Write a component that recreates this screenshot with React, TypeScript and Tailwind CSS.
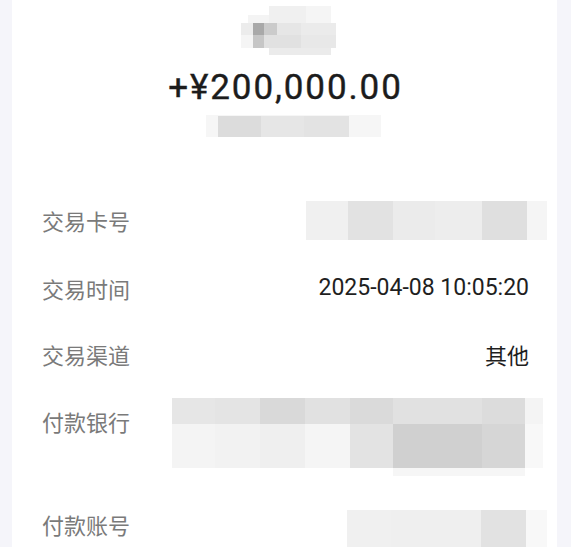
type Cell = { x: number; y: number; w: number; h: number; c: string };

// pixelated (censored) areas, coordinates local to each svg
const TOP_BLUR: Cell[] = [
  { x: 28, y: 0, w: 37, h: 17, c: '#f0f0f0' },
  { x: 65, y: 0, w: 25, h: 17, c: '#f5f5f5' },
  { x: 7, y: 9, w: 21, h: 8, c: '#f4f4f4' },
  { x: 0, y: 17, w: 12, h: 12, c: '#ececec' },
  { x: 12, y: 17, w: 11, h: 12, c: '#a9a9a9' },
  { x: 23, y: 17, w: 13, h: 12, c: '#cbcbcb' },
  { x: 36, y: 17, w: 24, h: 12, c: '#e6e6e6' },
  { x: 60, y: 17, w: 35, h: 12, c: '#ebebeb' },
  { x: 0, y: 29, w: 12, h: 13, c: '#f5f5f5' },
  { x: 12, y: 29, w: 11, h: 13, c: '#c6c6c6' },
  { x: 23, y: 29, w: 37, h: 13, c: '#e1e1e1' },
  { x: 60, y: 29, w: 35, h: 13, c: '#e8e8e8' },
  { x: 28, y: 42, w: 62, h: 7, c: '#ebebeb' },
];

const SUB_BLUR: Cell[] = [
  { x: 0, y: 0, w: 175, h: 22, c: '#f6f6f6' },
  { x: 12, y: 1, w: 43, h: 21, c: '#dcdcdc' },
  { x: 55, y: 1, w: 43, h: 21, c: '#e6e6e6' },
  { x: 98, y: 1, w: 45, h: 21, c: '#e3e3e3' },
];

const CARD_BLUR: Cell[] = [
  { x: 0, y: 0, w: 42, h: 39, c: '#f0f0f0' },
  { x: 42, y: 0, w: 45, h: 39, c: '#e2e2e2' },
  { x: 87, y: 0, w: 42, h: 39, c: '#ebebeb' },
  { x: 129, y: 0, w: 47, h: 39, c: '#ededed' },
  { x: 176, y: 0, w: 45, h: 39, c: '#dfdfdf' },
  { x: 221, y: 0, w: 20, h: 39, c: '#f5f5f5' },
];

const BANK_TOP = ['#e6e6e6', '#e4e4e4', '#d9d9d9', '#e1e1e1', '#dadada', '#e1e1e1', '#e1e1e1', '#dcdcdc'];
const BANK_BOTTOM = ['#f4f4f4', '#f2f2f2', '#efefef', '#f5f5f5', '#e3e3e3', '#d0d0d0', '#d0d0d0', '#d6d6d6'];
const BANK_X = [0, 43, 88, 133, 178, 221, 265, 310, 353];

const BANK_BLUR: Cell[] = [
  ...BANK_TOP.map((c, i) => ({ x: BANK_X[i], y: 0, w: BANK_X[i + 1] - BANK_X[i], h: 26, c })),
  { x: 353, y: 0, w: 18, h: 26, c: '#f4f4f4' },
  ...BANK_BOTTOM.map((c, i) => ({ x: BANK_X[i], y: 26, w: BANK_X[i + 1] - BANK_X[i], h: 44, c })),
  { x: 353, y: 26, w: 18, h: 44, c: '#f8f8f8' },
  { x: 221, y: 70, w: 132, h: 8, c: '#f6f6f6' },
];

const ACCOUNT_BLUR: Cell[] = [
  { x: 0, y: 0, w: 44, h: 40, c: '#f0f0f0' },
  { x: 44, y: 0, w: 45, h: 40, c: '#efefef' },
  { x: 89, y: 0, w: 45, h: 40, c: '#efefef' },
  { x: 134, y: 0, w: 45, h: 40, c: '#e2e2e2' },
  { x: 179, y: 0, w: 21, h: 40, c: '#f8f8f8' },
];

function Mosaic({ cells, width, height, className }: { cells: Cell[]; width: number; height: number; className?: string }) {
  return (
    <svg width={width} height={height} viewBox={`0 0 ${width} ${height}`} className={className}>
      {cells.map((b, i) => (
        <rect key={i} x={b.x} y={b.y} width={b.w} height={b.h} fill={b.c} />
      ))}
    </svg>
  );
}

const labelCls = "text-[22px] leading-[30px] text-[#7a7a7a] font-['Noto_Sans_CJK_SC',sans-serif]";

export default function App() {
  return (
    <div className="h-[547px] overflow-hidden bg-[#f5f5fa] pl-[12px] pr-[14px]">
      <div className="h-full bg-white pl-[30px] pr-[28px]">
        <div className="flex flex-col items-center">
          <Mosaic cells={TOP_BLUR} width={95} height={49} className="mt-[6px] ml-[6px]" />
          <div className="mt-[13px] font-['Roboto',sans-serif] text-[35px] leading-[40px] font-normal tracking-[1.9px] text-[#1c1c1c] [-webkit-text-stroke:0.4px_#1c1c1c]">
            +¥200,000.00
          </div>
          <Mosaic cells={SUB_BLUR} width={175} height={22} className="mt-[7px] ml-[16px]" />
        </div>

        <div className="mt-[49px]">
          <div className="flex h-[68px] items-center justify-between">
            <span className={labelCls}>交易卡号</span>
            <Mosaic cells={CARD_BLUR} width={241} height={39} className="-mr-[18px]" />
          </div>
          <div className="flex h-[67px] items-center justify-between">
            <span className={labelCls}>交易时间</span>
            <span className="font-['Roboto',sans-serif] text-[23px] leading-[30px] text-[#1f1f1f]">
              2025-04-08 10:05:20
            </span>
          </div>
          <div className="flex h-[66px] items-center justify-between">
            <span className={labelCls}>交易渠道</span>
            <span className="font-['Noto_Sans_CJK_SC',sans-serif] text-[22px] leading-[30px] text-[#1f1f1f]">
              其他
            </span>
          </div>
          <div className="flex h-[107px] items-start justify-between">
            <span className={`${labelCls} mt-[19px]`}>付款银行</span>
            <Mosaic cells={BANK_BLUR} width={371} height={78} className="-mr-[14px] mt-[11px]" />
          </div>
          <div className="flex h-[68px] items-start justify-between">
            <span className={`${labelCls} mt-[15px]`}>付款账号</span>
            <Mosaic cells={ACCOUNT_BLUR} width={200} height={40} className="-mr-[18px] mt-[16px]" />
          </div>
        </div>
      </div>
    </div>
  );
}
